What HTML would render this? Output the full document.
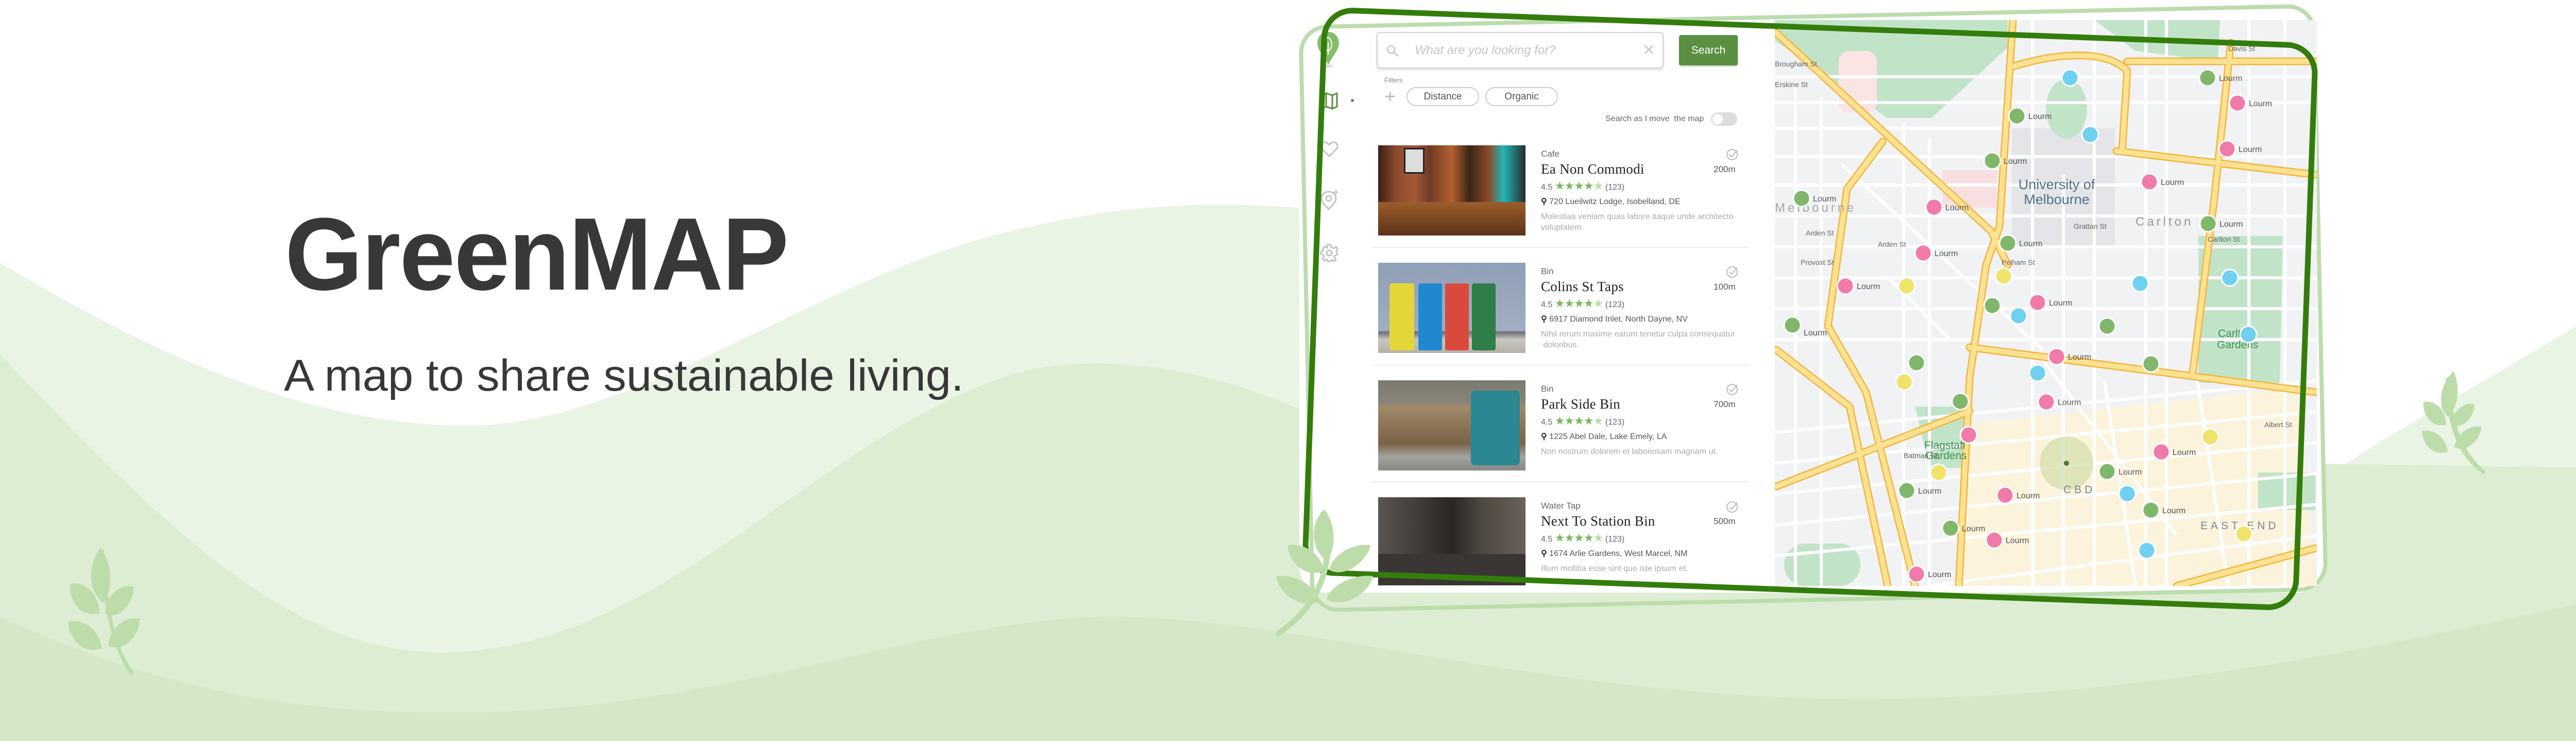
<!DOCTYPE html>
<html><head><meta charset="utf-8"><style>
*{margin:0;padding:0;box-sizing:border-box}
body{width:5057px;height:1438px;position:relative;overflow:hidden;background:#fff;font-family:"Liberation Sans",sans-serif;color:#444}
.a{position:absolute}
.t{position:absolute;white-space:nowrap}
.img{position:absolute;width:286px;height:175px;overflow:hidden}
.cat{font-size:17px;color:#666}
.ttl{font-family:"Liberation Serif",serif;font-size:27px;color:#222;letter-spacing:.3px}
.dist{font-size:17px;color:#555}
.rat{font-size:16px;color:#666}
.st{color:#79b95a;font-size:22px;letter-spacing:-1px}
.add{font-size:16px;color:#555}
.desc{font-size:16px;color:#aaa;line-height:21px}
</style></head><body>
<svg class="a" style="left:0;top:0" width="5057" height="1438">
<path d="M0,510 C300,690 600,826 906,826 C1250,826 1600,520 2000,440 C2150,405 2300,388 2520,403 L4508,930 C4700,800 4900,700 5057,597 V1438 H0Z" fill="#eaf4e5"/>
<path d="M0,688 C300,1000 550,1266 855,1266 C1300,1266 1600,820 2000,717 C2200,680 2400,740 2520,793 L4508,900 L5057,908 V1438 H0Z" fill="#ddedd4"/>
<path d="M0,1197 C400,1382 700,1382 900,1382 C1400,1382 1800,1197 2159,1197 C2500,1197 2900,1330 3500,1355 C4100,1370 4600,1260 5057,1160 V1438 H0Z" fill="#d4e8c9"/>
</svg>
<div class="t" style="left:553px;top:394px;font-size:200px;font-weight:bold;color:#383838;transform:scaleX(.97);transform-origin:0 0;line-height:1;letter-spacing:-2px">GreenMAP</div>
<div class="t" style="left:551px;top:686px;font-size:86px;color:#383838;line-height:1;transform:scaleX(1.03);transform-origin:0 0">A map to share sustainable living.</div>

<!-- left leaf -->
<svg class="a" style="left:125px;top:1055px" width="220" height="260" viewBox="0 0 200 250">
<g fill="#bddcaa"><path d="M68,10 Q75,170 120,235 Q126,244 118,246 Q70,180 60,20Z"/>
<path d="M66,110 C40,90 35,40 62,8 C85,40 85,90 66,110Z"/>
<path d="M60,130 C20,140 2,100 5,75 C35,70 58,95 60,130Z"/>
<path d="M70,130 C95,145 125,110 123,80 C95,75 70,100 70,130Z"/>
<path d="M64,195 C25,210 0,170 2,145 C35,140 60,165 64,195Z"/>
<path d="M76,190 C105,205 135,170 135,140 C105,135 78,160 76,190Z"/></g></svg>
<!-- right leaf -->
<svg class="a" style="left:4700px;top:720px" width="160" height="200" viewBox="0 0 200 250">
<g fill="#bddcaa"><path d="M70,10 Q70,170 150,238 Q160,246 150,250 Q60,190 58,20Z"/>
<path d="M64,110 C40,90 40,40 78,0 C95,40 90,90 64,110Z"/>
<path d="M60,130 C20,140 2,100 5,75 C35,70 58,95 60,130Z"/>
<path d="M72,130 C100,145 130,110 128,80 C100,75 74,100 72,130Z"/>
<path d="M64,195 C25,210 0,170 2,145 C35,140 60,165 64,195Z"/>
<path d="M80,185 C110,200 145,165 145,135 C115,130 84,155 80,185Z"/></g></svg>

<!-- white card -->
<div class="a" style="left:2522px;top:-30px;width:1988px;height:1180px;background:#fff;border-radius:50px"></div>
<div class="a" style="left:2532px;top:28px;width:1975px;height:1140px;border:8px solid #bcdcae;border-radius:55px;transform:rotate(-1.2deg)"></div>

<!-- sidebar -->
<svg class="a" style="left:2555px;top:60px" width="46" height="72" viewBox="0 0 46 72"><path d="M23,2 C10,2 2,12 2,24 C2,38 16,50 23,66 C30,50 44,38 44,24 C44,12 36,2 23,2Z" fill="#86bd6a"/><path d="M23,12 C14,20 14,32 23,40 C32,32 32,20 23,12Z M23,22 V46" fill="none" stroke="#fff" stroke-width="2"/><ellipse cx="23" cy="68" rx="10" ry="3" fill="#ddd"/></svg>
<svg class="a" style="left:2562px;top:178px" width="36" height="36" viewBox="0 0 36 36" fill="none" stroke="#5b8f42" stroke-width="3"><path d="M3,7 L12,3 L24,7 L33,3 V29 L24,33 L12,29 L3,33Z M12,3V29 M24,7V33"/></svg>
<div class="a" style="left:2622px;top:192px;width:6px;height:6px;border-radius:50%;background:#5b8f42"></div>
<svg class="a" style="left:2562px;top:274px" width="36" height="32" viewBox="0 0 36 32" fill="none" stroke="#c4c4c4" stroke-width="3"><path d="M18,29 L4,15 C-1,9 3,2 10,2 C14,2 16,5 18,7 C20,5 22,2 26,2 C33,2 37,9 32,15Z"/></svg>
<svg class="a" style="left:2562px;top:367px" width="38" height="42" viewBox="0 0 38 42" fill="none" stroke="#c4c4c4" stroke-width="3"><path d="M17,39 C10,31 3,25 3,18 C3,10 9,5 17,5 C25,5 31,10 31,18 C31,25 24,31 17,39Z"/><circle cx="17" cy="18" r="5"/><path d="M31,1 V11 M26,6 H36" stroke-width="2"/></svg>
<svg class="a" style="left:2562px;top:473px" width="36" height="36" viewBox="0 0 36 36" fill="none" stroke="#c4c4c4" stroke-width="3"><circle cx="18" cy="18" r="5"/><path d="M15,2 H21 L22,7 L27,9 L31,6 L35,10 L32,14 L33,17 L34,21 L29,23 L28,27 L31,31 L27,34 L23,31 L21,34 H15 L13,30 L9,33 L5,29 L8,25 L6,21 L2,20 V15 L7,13 L6,9 L10,5 L14,8Z"/></svg>

<!-- search -->
<div class="a" style="left:2672px;top:62px;width:557px;height:71px;border:2px solid #d0d0d0;border-radius:7px;box-shadow:0 3px 5px rgba(0,0,0,.12)"></div>
<svg class="a" style="left:2690px;top:86px" width="26" height="26" viewBox="0 0 26 26" fill="none" stroke="#ccc" stroke-width="3"><circle cx="10" cy="10" r="7"/><path d="M15,15 L23,23"/></svg>
<div class="t" style="left:2746px;top:84px;font-size:24px;font-style:italic;color:#c4c4c4">What are you looking for?</div>
<div class="t" style="left:3188px;top:80px;font-size:30px;color:#ccc">✕</div>
<div class="a" style="left:3259px;top:68px;width:114px;height:59px;background:#5b8f42;border-radius:4px;box-shadow:0 2px 4px rgba(0,0,0,.2);color:#fff;font-size:21px;text-align:center;line-height:59px">Search</div>
<div class="t" style="left:2687px;top:148px;font-size:13px;color:#888">Filters</div>
<div class="t" style="left:2687px;top:168px;font-size:38px;color:#bbb;line-height:40px;font-weight:300">+</div>
<div class="a" style="left:2730px;top:169px;width:141px;height:37px;border:2px solid #ccc;border-radius:19px;font-size:19px;color:#555;text-align:center;line-height:33px">Distance</div>
<div class="a" style="left:2883px;top:169px;width:141px;height:37px;border:2px solid #ccc;border-radius:19px;font-size:19px;color:#555;text-align:center;line-height:33px">Organic</div>
<div class="t" style="left:3116px;top:222px;font-size:16px;color:#666">Search as I move&nbsp; the map</div>
<div class="a" style="left:3321px;top:218px;width:51px;height:26px;border-radius:13px;background:#ddd"><div class="a" style="left:3px;top:3px;width:20px;height:20px;border-radius:50%;background:#fff"></div></div>

<!-- cards -->
<div class="img" style="left:2675px;top:282px;background:linear-gradient(90deg,#3a1f14 0%,#8c4a2c 12%,#a55a3a 25%,#6e3a24 35%,#b4602f 50%,#3b2518 62%,#8a4a2a 75%,#23b7b8 85%,#2a2a2a 100%)"><div class="a" style="left:50px;top:5px;width:40px;height:50px;background:#ddd;border:3px solid #222"></div><div class="a" style="left:0;top:110px;width:286px;height:65px;background:linear-gradient(#9c5d2b,#5c3318)"></div></div>
<div class="img" style="left:2675px;top:510px;background:linear-gradient(#8f9fb6,#a0aec0 75%,#6d6f76 77%,#c9c6c0 85%,#b5b1aa)"><div class="a" style="left:22px;top:40px;width:48px;height:130px;background:#e4d53a;border-radius:4px"></div><div class="a" style="left:78px;top:40px;width:46px;height:130px;background:#1f88d0;border-radius:4px"></div><div class="a" style="left:130px;top:40px;width:46px;height:130px;background:#d94a3c;border-radius:4px"></div><div class="a" style="left:182px;top:40px;width:46px;height:130px;background:#2f7d48;border-radius:4px"></div></div>
<div class="img" style="left:2675px;top:738px;background:linear-gradient(#7c7a70 0%,#8a8478 25%,#a08868 30%,#7a6448 70%,#a3a39f 85%,#878783)"><div class="a" style="left:180px;top:20px;width:95px;height:145px;background:#2b8792;border-radius:8px"></div></div>
<div class="img" style="left:2675px;top:965px;height:171px;background:linear-gradient(90deg,#5a5550,#3e3a36 30%,#2a2622 50%,#4d4741 70%,#6a6259)"><div class="a" style="left:0;top:110px;width:286px;height:61px;background:#3a3633"></div></div>

<div class="t cat" style="left:2991px;top:289px">Cafe</div>
<div class="t ttl" style="left:2991px;top:313px">Ea Non Commodi</div>
<div class="t dist" style="left:3326px;top:319px">200m</div>
<div class="t rat" style="left:2991px;top:348px">4.5 <span class="st">★★★★<span style="color:#b7dca5">★</span></span> (123)</div>
<div class="t add" style="left:2991px;top:381px"><b style="color:#222">⚲</b> 720 Lueilwitz Lodge, Isobelland, DE</div>
<div class="a desc" style="left:2991px;top:410px;white-space:nowrap">Molestias veniam quas labore itaque unde architecto<br>voluptatem.</div>
<div class="a" style="left:2663px;top:479px;width:732px;height:2px;background:#eee"></div>

<div class="t cat" style="left:2991px;top:517px">Bin</div>
<div class="t ttl" style="left:2991px;top:541px">Colins St Taps</div>
<div class="t dist" style="left:3326px;top:547px">100m</div>
<div class="t rat" style="left:2991px;top:576px">4.5 <span class="st">★★★★<span style="color:#b7dca5">★</span></span> (123)</div>
<div class="t add" style="left:2991px;top:609px"><b style="color:#222">⚲</b> 6917 Diamond Inlet, North Dayne, NV</div>
<div class="a desc" style="left:2991px;top:638px;white-space:nowrap">Nihil rerum maxime earum tenetur culpa consequatur<br>&nbsp;doloribus.</div>
<div class="a" style="left:2663px;top:707px;width:732px;height:2px;background:#eee"></div>

<div class="t cat" style="left:2991px;top:745px">Bin</div>
<div class="t ttl" style="left:2991px;top:769px">Park Side Bin</div>
<div class="t dist" style="left:3326px;top:775px">700m</div>
<div class="t rat" style="left:2991px;top:804px">4.5 <span class="st">★★★★<span style="color:#b7dca5">★</span></span> (123)</div>
<div class="t add" style="left:2991px;top:837px"><b style="color:#222">⚲</b> 1225 Abel Dale, Lake Emely, LA</div>
<div class="a desc" style="left:2991px;top:866px;white-space:nowrap">Non nostrum dolorem et laboriosam magnam ut.</div>
<div class="a" style="left:2663px;top:934px;width:732px;height:2px;background:#eee"></div>

<div class="t cat" style="left:2991px;top:972px">Water Tap</div>
<div class="t ttl" style="left:2991px;top:996px">Next To Station Bin</div>
<div class="t dist" style="left:3326px;top:1002px">500m</div>
<div class="t rat" style="left:2991px;top:1031px">4.5 <span class="st">★★★★<span style="color:#b7dca5">★</span></span> (123)</div>
<div class="t add" style="left:2991px;top:1064px"><b style="color:#222">⚲</b> 1674 Arlie Gardens, West Marcel, NM</div>
<div class="a desc" style="left:2991px;top:1093px;white-space:nowrap">Illum mollitia esse sint quo iste ipsum et.</div>

<svg class="a" style="left:3350px;top:287px" width="26" height="930" viewBox="0 0 26 930" fill="none" stroke="#bbb" stroke-width="2"><g id="c"><circle cx="12" cy="13" r="10"/><path d="M7,13 L11,17 L22,4"/></g><use href="#c" y="228"/><use href="#c" y="456"/><use href="#c" y="684"/></svg>

<!-- map -->
<svg class="a" style="left:3445px;top:39px" width="1052" height="1098" viewBox="0 0 1052 1098">
<rect width="1052" height="1098" fill="#f1f2f4"/>
<polygon points="357,786 1012,713 1052,1098 357,1098" fill="#fcf3dc"/>
<polygon points="0,0 452,0 452,53 304,190 219,190 0,40" fill="#c1e4c9"/>
<rect x="124" y="60" width="74" height="120" rx="20" fill="#fbe4e4"/>
<polygon points="621,0 864,0 860,80 700,60" fill="#c1e4c9"/>
<rect x="460" y="210" width="200" height="230" fill="#e4e5e8"/>
<ellipse cx="566" cy="172" rx="40" ry="58" fill="#c1e4c9"/>
<rect x="325" y="291" width="106" height="73" fill="#f8e0e0"/>
<polygon points="822,419 986,419 980,704 822,704" fill="#c1e4c9"/>
<polygon points="272,750 367,750 367,869 300,869" fill="#c1e4c9"/>
<rect x="18" y="1016" width="148" height="82" rx="40" fill="#c1e4c9"/>
<rect x="938" y="878" width="111" height="73" fill="#c1e4c9"/>
<g stroke="#fff" stroke-width="6" fill="none">
<path d="M0,110 H1052 M0,160 H1052 M0,210 H452 M0,265 H1052 M0,320 H1052 M0,380 H1052 M0,440 H1052 M0,500 H1052 M0,560 H1052 M0,620 H1052 M0,800 L1052,700 M0,860 L1052,760 M0,920 L1052,820 M0,980 L1052,880 M0,1040 L1052,940 M300,1098 L1052,1000"/>
<path d="M40,120 V1098 M90,150 V1098 M250,200 V1098 M300,230 V1098 M500,0 V1098 M560,300 V1098 M620,0 V1098 M720,0 V1098 M760,0 V1098 M920,0 V1098 M990,0 V1098 M640,700 L700,1098 M820,700 L880,1098"/>
<path d="M3,25 L420,410 M130,280 L520,640 M520,660 L780,1000 M220,500 L340,620"/>
</g>
<g fill="none" stroke-linecap="round" stroke-linejoin="round">
<g stroke="#f3b53a" stroke-width="15">
<path d="M3,25 L420,410 L452,475"/><path d="M462,0 L436,401 L410,475 L378,695 L357,1098"/>
<path d="M209,236 L140,328 L103,594 L177,722 L272,1098"/><path d="M3,640 L145,750 L219,1098"/>
<path d="M462,90 C560,60 650,60 684,99 L674,254"/><path d="M684,80 L1049,80"/>
<path d="M885,44 L853,346 L811,685"/><path d="M663,254 L1049,300"/><path d="M378,635 L1049,722"/>
<path d="M3,905 L378,759"/><path d="M780,1098 L1049,1025"/></g>
<g stroke="#fde293" stroke-width="10">
<path d="M3,25 L420,410 L452,475"/><path d="M462,0 L436,401 L410,475 L378,695 L357,1098"/>
<path d="M209,236 L140,328 L103,594 L177,722 L272,1098"/><path d="M3,640 L145,750 L219,1098"/>
<path d="M462,90 C560,60 650,60 684,99 L674,254"/><path d="M684,80 L1049,80"/>
<path d="M885,44 L853,346 L811,685"/><path d="M663,254 L1049,300"/><path d="M378,635 L1049,722"/>
<path d="M3,905 L378,759"/><path d="M780,1098 L1049,1025"/></g></g>
<circle cx="566" cy="860" r="52" fill="#c9d9a0" opacity=".6"/><circle cx="566" cy="860" r="5" fill="#4f7a30"/>
<g font-family="Liberation Sans,sans-serif">
<text x="547" y="328" font-size="27" fill="#4f7387" text-anchor="middle">University of</text>
<text x="547" y="357" font-size="27" fill="#4f7387" text-anchor="middle">Melbourne</text>
<text x="700" y="399" font-size="24" fill="#999" letter-spacing="5">Carlton</text>
<text x="560" y="918" font-size="21" fill="#7a8799" letter-spacing="6">CBD</text>
<text x="826" y="988" font-size="21" fill="#7a8799" letter-spacing="6">EAST END</text>
<text x="0" y="372" font-size="24" fill="#aaa" letter-spacing="5">Melbourne</text>
<text x="290" y="832" font-size="21" fill="#3f8f55">Flagstaff</text><text x="292" y="852" font-size="21" fill="#3f8f55">Gardens</text>
<text x="860" y="615" font-size="21" fill="#3f8f55">Carlton</text><text x="858" y="637" font-size="21" fill="#3f8f55">Gardens</text>
<g font-size="14" fill="#666"><text x="60" y="418">Arden St</text><text x="200" y="440">Arden St</text><text x="50" y="475">Provost St</text><text x="0" y="130">Erskine St</text><text x="0" y="90">Brougham St</text><text x="440" y="475">Pelham St</text><text x="580" y="405">Grattan St</text><text x="840" y="430">Carlton St</text><text x="880" y="60">Davis St</text><text x="950" y="790">Albert St</text><text x="250" y="850">Batman St</text></g>
</g>
<g font-family="Liberation Sans,sans-serif" font-size="16" fill="#555">
<circle cx="573" cy="112" r="16" fill="#6fd0ef" stroke="#fff" stroke-width="3"/>
<circle cx="470" cy="186" r="16" fill="#80b76b" stroke="#fff" stroke-width="3"/><text x="492" y="192">Lourm</text>
<circle cx="612" cy="222" r="16" fill="#6fd0ef" stroke="#fff" stroke-width="3"/>
<circle cx="422" cy="273" r="16" fill="#80b76b" stroke="#fff" stroke-width="3"/><text x="444" y="279">Lourm</text>
<circle cx="840" cy="112" r="16" fill="#80b76b" stroke="#fff" stroke-width="3"/><text x="862" y="118">Lourm</text>
<circle cx="898" cy="161" r="16" fill="#f07aa9" stroke="#fff" stroke-width="3"/><text x="920" y="167">Lourm</text>
<circle cx="878" cy="250" r="16" fill="#f07aa9" stroke="#fff" stroke-width="3"/><text x="900" y="256">Lourm</text>
<circle cx="727" cy="314" r="16" fill="#f07aa9" stroke="#fff" stroke-width="3"/><text x="749" y="320">Lourm</text>
<circle cx="52" cy="346" r="16" fill="#80b76b" stroke="#fff" stroke-width="3"/><text x="74" y="352">Lourm</text>
<circle cx="309" cy="363" r="16" fill="#f07aa9" stroke="#fff" stroke-width="3"/><text x="331" y="369">Lourm</text>
<circle cx="841" cy="395" r="16" fill="#80b76b" stroke="#fff" stroke-width="3"/><text x="863" y="401">Lourm</text>
<circle cx="452" cy="433" r="16" fill="#80b76b" stroke="#fff" stroke-width="3"/><text x="474" y="439">Lourm</text>
<circle cx="288" cy="452" r="16" fill="#f07aa9" stroke="#fff" stroke-width="3"/><text x="310" y="458">Lourm</text>
<circle cx="444" cy="497" r="16" fill="#f0e36b" stroke="#fff" stroke-width="3"/>
<circle cx="137" cy="516" r="16" fill="#f07aa9" stroke="#fff" stroke-width="3"/><text x="159" y="522">Lourm</text>
<circle cx="256" cy="516" r="16" fill="#f0e36b" stroke="#fff" stroke-width="3"/>
<circle cx="709" cy="511" r="16" fill="#6fd0ef" stroke="#fff" stroke-width="3"/>
<circle cx="883" cy="500" r="16" fill="#6fd0ef" stroke="#fff" stroke-width="3"/>
<circle cx="422" cy="554" r="16" fill="#80b76b" stroke="#fff" stroke-width="3"/>
<circle cx="510" cy="548" r="16" fill="#f07aa9" stroke="#fff" stroke-width="3"/><text x="532" y="554">Lourm</text>
<circle cx="473" cy="574" r="16" fill="#6fd0ef" stroke="#fff" stroke-width="3"/>
<circle cx="645" cy="594" r="16" fill="#80b76b" stroke="#fff" stroke-width="3"/>
<circle cx="34" cy="592" r="16" fill="#80b76b" stroke="#fff" stroke-width="3"/><text x="56" y="612">Lourm</text>
<circle cx="919" cy="610" r="16" fill="#6fd0ef" stroke="#fff" stroke-width="3"/>
<circle cx="547" cy="653" r="16" fill="#f07aa9" stroke="#fff" stroke-width="3"/><text x="569" y="659">Lourm</text>
<circle cx="275" cy="665" r="16" fill="#80b76b" stroke="#fff" stroke-width="3"/>
<circle cx="730" cy="667" r="16" fill="#80b76b" stroke="#fff" stroke-width="3"/>
<circle cx="251" cy="702" r="16" fill="#f0e36b" stroke="#fff" stroke-width="3"/>
<circle cx="510" cy="685" r="16" fill="#6fd0ef" stroke="#fff" stroke-width="3"/>
<circle cx="360" cy="740" r="16" fill="#80b76b" stroke="#fff" stroke-width="3"/>
<circle cx="527" cy="741" r="16" fill="#f07aa9" stroke="#fff" stroke-width="3"/><text x="549" y="747">Lourm</text>
<circle cx="376" cy="805" r="16" fill="#f07aa9" stroke="#fff" stroke-width="3"/>
<circle cx="845" cy="809" r="16" fill="#f0e36b" stroke="#fff" stroke-width="3"/>
<circle cx="750" cy="838" r="16" fill="#f07aa9" stroke="#fff" stroke-width="3"/><text x="772" y="844">Lourm</text>
<circle cx="318" cy="878" r="16" fill="#f0e36b" stroke="#fff" stroke-width="3"/>
<circle cx="645" cy="876" r="16" fill="#80b76b" stroke="#fff" stroke-width="3"/><text x="667" y="882">Lourm</text>
<circle cx="256" cy="913" r="16" fill="#80b76b" stroke="#fff" stroke-width="3"/><text x="278" y="919">Lourm</text>
<circle cx="447" cy="922" r="16" fill="#f07aa9" stroke="#fff" stroke-width="3"/><text x="469" y="928">Lourm</text>
<circle cx="684" cy="919" r="16" fill="#6fd0ef" stroke="#fff" stroke-width="3"/>
<circle cx="730" cy="951" r="16" fill="#80b76b" stroke="#fff" stroke-width="3"/><text x="752" y="957">Lourm</text>
<circle cx="341" cy="986" r="16" fill="#80b76b" stroke="#fff" stroke-width="3"/><text x="363" y="992">Lourm</text>
<circle cx="426" cy="1009" r="16" fill="#f07aa9" stroke="#fff" stroke-width="3"/><text x="448" y="1015">Lourm</text>
<circle cx="910" cy="997" r="16" fill="#f0e36b" stroke="#fff" stroke-width="3"/>
<circle cx="722" cy="1029" r="16" fill="#6fd0ef" stroke="#fff" stroke-width="3"/>
<circle cx="275" cy="1075" r="16" fill="#f07aa9" stroke="#fff" stroke-width="3"/><text x="297" y="1081">Lourm</text>
</g>
</svg>

<!-- rotated frame -->
<div class="a" style="left:2546px;top:48px;width:1935px;height:1103px;border:11px solid #347d0c;border-radius:60px;transform:rotate(2.1deg)"></div>

<!-- mockup leaf -->
<svg class="a" style="left:2475px;top:988px" width="200" height="250" viewBox="0 0 200 250">
<g fill="#bddcaa"><path d="M96,60 Q100,170 5,235 Q-3,244 5,248 Q110,180 108,60Z"/>
<path d="M100,100 C70,80 65,30 95,0 C120,30 118,80 100,100Z"/>
<path d="M95,120 C55,135 25,100 25,70 C60,65 90,90 95,120Z"/>
<path d="M105,118 C135,135 180,100 185,70 C150,65 110,90 105,118Z"/>
<path d="M85,180 C45,195 5,160 2,130 C40,125 80,150 85,180Z"/>
<path d="M100,175 C135,195 185,160 190,130 C150,125 105,150 100,175Z"/></g></svg>
</body></html>
